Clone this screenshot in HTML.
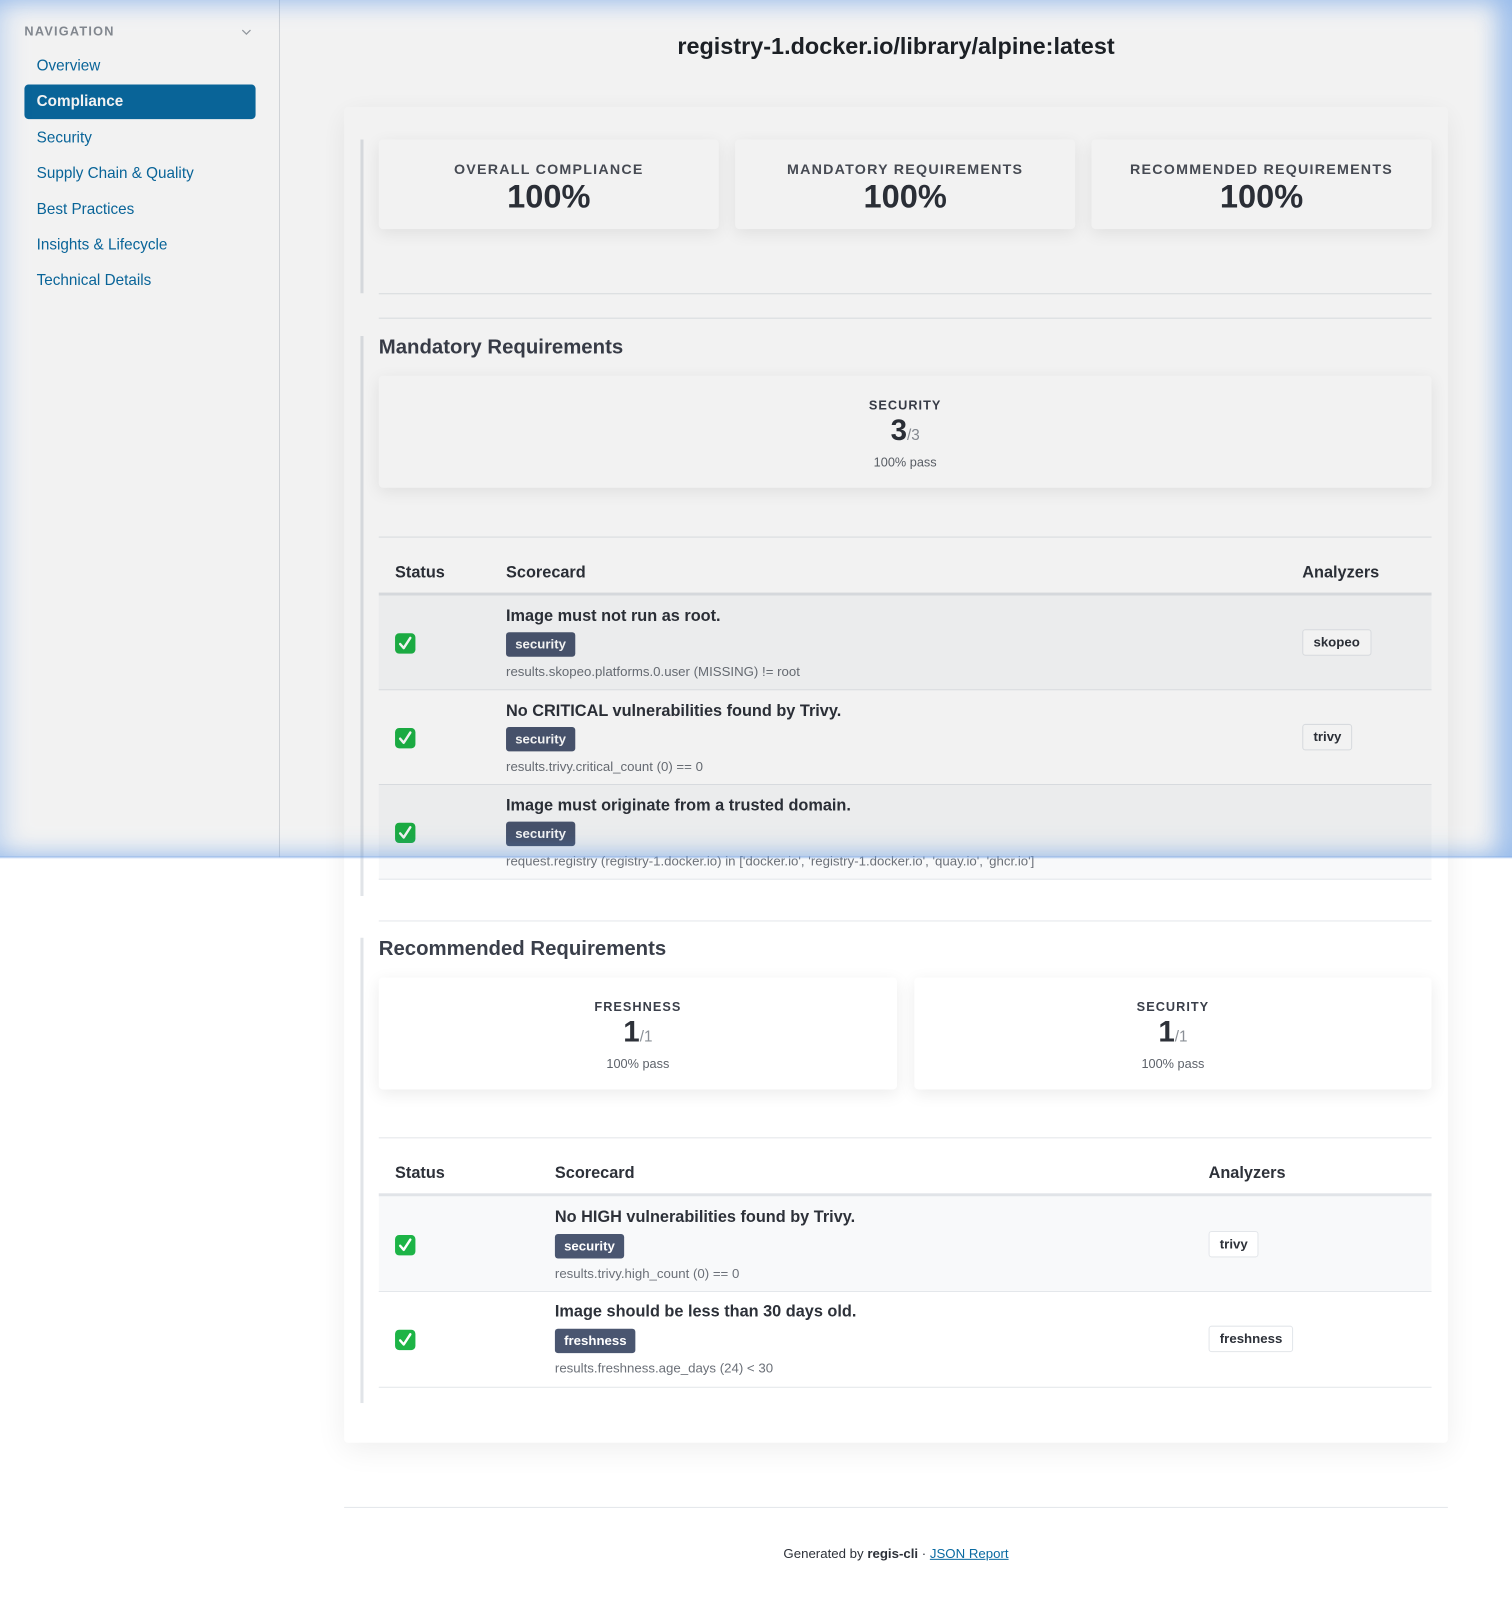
<!DOCTYPE html>
<html><head><meta charset="utf-8">
<style>
*{box-sizing:border-box;margin:0;padding:0}
html,body{width:1512px;height:1596px;background:#fff;font-family:"Liberation Sans",sans-serif;color:#2d3139;overflow:hidden}
#w{position:absolute;left:0;top:0;width:1485px;height:1568px;transform:scale(1.01818);transform-origin:0 0}
.a{position:absolute}
.nav{color:#0a6aa1;font-size:15px}
.card{position:absolute;background:#fff;border-radius:4px;box-shadow:0 4px 16px rgba(0,0,0,.08)}
.lab{position:absolute;left:0;right:0;text-align:center;font-size:14px;font-weight:bold;letter-spacing:1.2px;color:#4a4f58}
.big{position:absolute;left:0;right:0;text-align:center;font-size:32px;font-weight:bold;color:#2d3139}
.hr{position:absolute;height:1px;background:#e3e6ea}
.vb{position:absolute;width:3px;background:#e1e4e8}
.h2{position:absolute;font-size:20px;font-weight:bold;color:#3a3f4a}
.sm{position:absolute;left:0;right:0;text-align:center}
.th{position:absolute;font-size:16px;font-weight:bold;color:#2d3139}
.row{position:absolute;border-bottom:1px solid #e3e6ea}
.t1{position:absolute;font-size:16px;font-weight:bold;color:#2d3139}
.tag{position:absolute;background:#4a5670;color:#fff;font-size:13px;font-weight:bold;padding:0 9px;height:24px;line-height:24px;border-radius:3px}
.cond{position:absolute;font-size:13px;color:#6b7078}
.an{position:absolute;border:1px solid #e3e6ea;border-radius:3px;background:#fff;font-size:13px;font-weight:bold;height:26px;line-height:24px;padding:0 10px;color:#2d3139}
.chk{position:absolute;width:20px;height:20px;border-radius:4px;background:#1db446}
</style></head><body><div id="w">

<div class="a" style="left:274px;top:0;width:1px;height:842px;background:#dcdfe3"></div>
<div class="a" style="left:24px;top:24px;font-size:12.5px;font-weight:bold;letter-spacing:1.2px;color:#8a8f96">NAVIGATION</div>
<svg class="a" style="left:237px;top:28px" width="10" height="7" viewBox="0 0 10 7"><path d="M1 1.5l4 4 4-4" fill="none" stroke="#9aa0a6" stroke-width="1.2"/></svg>
<div class="a nav" style="left:36px;top:56px">Overview</div>
<div class="a" style="left:24px;top:83px;width:227px;height:34px;background:#0a6aa1;border-radius:4px"></div>
<div class="a" style="left:36px;top:91px;font-size:15px;font-weight:bold;color:#fff">Compliance</div>
<div class="a nav" style="left:36px;top:127px">Security</div>
<div class="a nav" style="left:36px;top:162px">Supply Chain &amp; Quality</div>
<div class="a nav" style="left:36px;top:197px">Best Practices</div>
<div class="a nav" style="left:36px;top:232px">Insights &amp; Lifecycle</div>
<div class="a nav" style="left:36px;top:267px">Technical Details</div>

<div class="a" style="left:338px;width:1084px;top:32px;text-align:center;font-size:23px;font-weight:bold;color:#1e2228">registry-1.docker.io/library/alpine:latest</div>

<div class="card" style="left:338px;top:105px;width:1084px;height:1312px;box-shadow:0 6px 30px rgba(0,0,0,.07)"></div>

<div class="vb" style="left:354px;top:137px;height:151px"></div>
<div class="card" style="left:372px;top:137px;width:334px;height:88px"><div class="lab" style="top:21px">OVERALL COMPLIANCE</div><div class="big" style="top:38px">100%</div></div>
<div class="card" style="left:722px;top:137px;width:334px;height:88px"><div class="lab" style="top:21px">MANDATORY REQUIREMENTS</div><div class="big" style="top:38px">100%</div></div>
<div class="card" style="left:1072px;top:137px;width:334px;height:88px"><div class="lab" style="top:21px">RECOMMENDED REQUIREMENTS</div><div class="big" style="top:38px">100%</div></div>
<div class="hr" style="left:372px;width:1034px;top:288px"></div>
<div class="hr" style="left:372px;width:1034px;top:312px"></div>

<div class="vb" style="left:354px;top:330px;height:550px"></div>
<div class="h2" style="left:372px;top:330px">Mandatory Requirements</div>
<div class="card" style="left:372px;top:369px;width:1034px;height:110px">
 <div class="sm" style="top:22px;font-size:12.5px;font-weight:bold;letter-spacing:1px;color:#3a3f4a">SECURITY</div>
 <div class="sm" style="top:38px"><span style="font-size:29px;font-weight:bold">3</span><span style="font-size:15px;color:#8a8f96">/3</span></div>
 <div class="sm" style="top:78px;font-size:12.5px;color:#5d626a">100% pass</div>
</div>
<div class="hr" style="left:372px;width:1034px;top:527px"></div>
<div class="th" style="left:388px;top:554px">Status</div>
<div class="th" style="left:497px;top:554px">Scorecard</div>
<div class="th" style="left:1279px;top:554px">Analyzers</div>
<div class="a" style="left:372px;width:1034px;top:582px;height:3px;background:#e1e4e8"></div>

<div class="row" style="left:372px;width:1034px;top:585px;height:93px;background:#f8f9fa"></div>
<div class="chk" style="left:388px;top:622px"></div>
<div class="t1" style="left:497px;top:597px">Image must not run as root.</div>
<div class="tag" style="left:497px;top:621px">security</div>
<div class="cond" style="left:497px;top:652px">results.skopeo.platforms.0.user (MISSING) != root</div>
<div class="an" style="left:1279px;top:618px">skopeo</div>

<div class="row" style="left:372px;width:1034px;top:678px;height:93px;background:#fff"></div>
<div class="chk" style="left:388px;top:715px"></div>
<div class="t1" style="left:497px;top:690px">No CRITICAL vulnerabilities found by Trivy.</div>
<div class="tag" style="left:497px;top:714px">security</div>
<div class="cond" style="left:497px;top:745px">results.trivy.critical_count (0) == 0</div>
<div class="an" style="left:1279px;top:711px">trivy</div>

<div class="row" style="left:372px;width:1034px;top:771px;height:93px;background:#f8f9fa"></div>
<div class="chk" style="left:388px;top:808px"></div>
<div class="t1" style="left:497px;top:783px">Image must originate from a trusted domain.</div>
<div class="tag" style="left:497px;top:807px">security</div>
<div class="cond" style="left:497px;top:838px">request.registry (registry-1.docker.io) in ['docker.io', 'registry-1.docker.io', 'quay.io', 'ghcr.io']</div>

<div class="hr" style="left:372px;width:1034px;top:904px"></div>
<div class="vb" style="left:354px;top:921px;height:457px"></div>
<div class="h2" style="left:372px;top:921px">Recommended Requirements</div>
<div class="card" style="left:372px;top:960px;width:509px;height:110px">
 <div class="sm" style="top:22px;font-size:12.5px;font-weight:bold;letter-spacing:1px;color:#3a3f4a">FRESHNESS</div>
 <div class="sm" style="top:38px"><span style="font-size:29px;font-weight:bold">1</span><span style="font-size:15px;color:#8a8f96">/1</span></div>
 <div class="sm" style="top:78px;font-size:12.5px;color:#5d626a">100% pass</div>
</div>
<div class="card" style="left:898px;top:960px;width:508px;height:110px">
 <div class="sm" style="top:22px;font-size:12.5px;font-weight:bold;letter-spacing:1px;color:#3a3f4a">SECURITY</div>
 <div class="sm" style="top:38px"><span style="font-size:29px;font-weight:bold">1</span><span style="font-size:15px;color:#8a8f96">/1</span></div>
 <div class="sm" style="top:78px;font-size:12.5px;color:#5d626a">100% pass</div>
</div>
<div class="hr" style="left:372px;width:1034px;top:1117px"></div>
<div class="th" style="left:388px;top:1144px">Status</div>
<div class="th" style="left:545px;top:1144px">Scorecard</div>
<div class="th" style="left:1187px;top:1144px">Analyzers</div>
<div class="a" style="left:372px;width:1034px;top:1172px;height:3px;background:#e1e4e8"></div>

<div class="row" style="left:372px;width:1034px;top:1175px;height:94px;background:#f8f9fa"></div>
<div class="chk" style="left:388px;top:1213px"></div>
<div class="t1" style="left:545px;top:1187px">No HIGH vulnerabilities found by Trivy.</div>
<div class="tag" style="left:545px;top:1212px">security</div>
<div class="cond" style="left:545px;top:1243px">results.trivy.high_count (0) == 0</div>
<div class="an" style="left:1187px;top:1209px">trivy</div>

<div class="row" style="left:372px;width:1034px;top:1269px;height:94px;background:#fff"></div>
<div class="chk" style="left:388px;top:1306px"></div>
<div class="t1" style="left:545px;top:1280px">Image should be less than 30 days old.</div>
<div class="tag" style="left:545px;top:1305px">freshness</div>
<div class="cond" style="left:545px;top:1336px">results.freshness.age_days (24) &lt; 30</div>
<div class="an" style="left:1187px;top:1302px">freshness</div>

<div class="hr" style="left:338px;width:1084px;top:1480px"></div>
<div class="a" style="left:338px;width:1084px;top:1518px;text-align:center;font-size:13px;color:#2d3139">Generated by <b>regis-cli</b> · <span style="color:#0a6aa1;text-decoration:underline">JSON Report</span></div>

<div class="a" style="left:0;top:0;width:1485px;height:842px;background:rgba(0,0,0,.05);box-shadow:inset 0 0 28px rgba(90,150,230,.45), inset -18px 0 20px rgba(90,150,230,.35)"></div>
<div class="a" style="left:0;top:841px;width:1485px;height:3px;background:linear-gradient(rgba(120,165,230,.5),rgba(120,165,230,0))"></div>

</div>
<script>
document.querySelectorAll('.chk').forEach(function(e){e.innerHTML='<svg width="20" height="20" viewBox="0 0 20 20"><path d="M5 10.5l3.5 4L15 4.5" fill="none" stroke="#fff" stroke-width="2.4" stroke-linecap="round" stroke-linejoin="round"/></svg>'});
</script>
</body></html>
